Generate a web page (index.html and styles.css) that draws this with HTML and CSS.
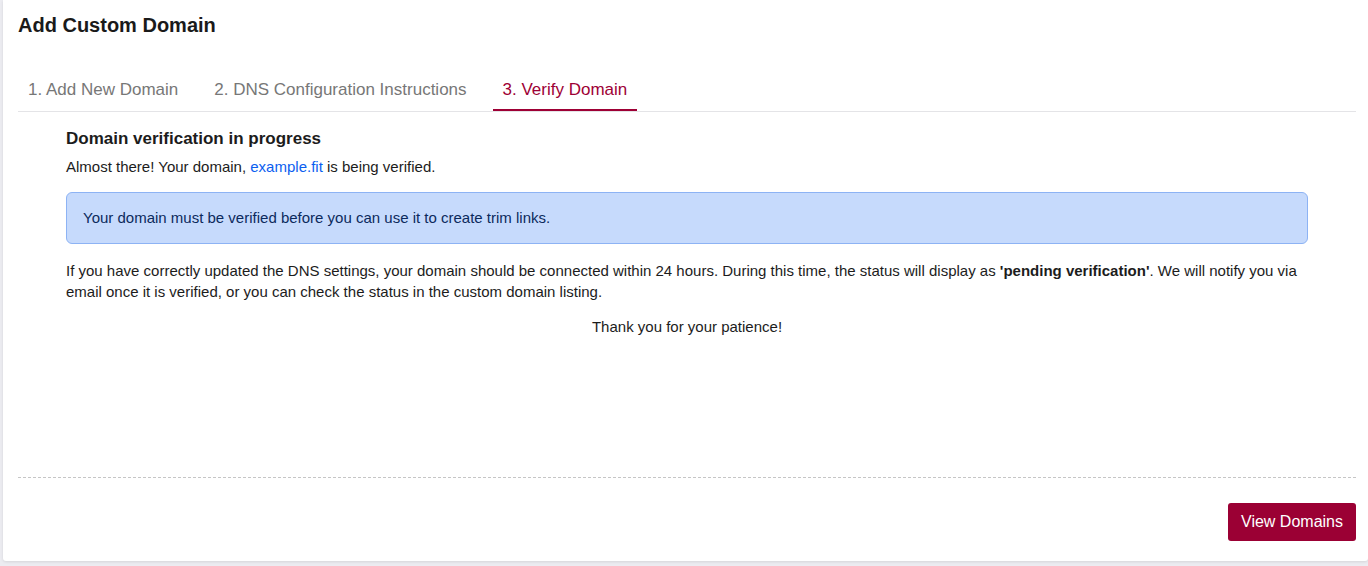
FILE: index.html
```html
<!DOCTYPE html>
<html lang="en">
<head>
<meta charset="utf-8">
<title>Add Custom Domain</title>
<link rel="stylesheet" href="styles.css">
</head>
<body>
<div class="card">
  <h1 class="title">Add Custom Domain</h1>
  <nav class="tabs">
    <span class="tab">1. Add New Domain</span>
    <span class="tab">2. DNS Configuration Instructions</span>
    <span class="tab active">3. Verify Domain</span>
  </nav>
  <section class="content">
    <h2 class="heading">Domain verification in progress</h2>
    <p class="lead">Almost there! Your domain, <a class="link" href="#">example.fit</a> is being verified.</p>
    <div class="alert">Your domain must be verified before you can use it to create trim links.</div>
    <p class="info">If you have correctly updated the DNS settings, your domain should be connected within 24 hours. During this time, the status will display as <strong>'pending verification'</strong>. We will notify you via email once it is verified, or you can check the status in the custom domain listing.</p>
    <p class="thanks">Thank you for your patience!</p>
  </section>
  <footer class="footer">
    <button class="btn" type="button">View Domains</button>
  </footer>
</div>
</body>
</html>
```

FILE: styles.css
```css
* { box-sizing: border-box; }
html, body { margin: 0; padding: 0; }
body {
  background: #ececf1;
  font-family: "Liberation Sans", Arial, Helvetica, sans-serif;
  color: #1c1c1c;
  height: 566px;
  overflow: hidden;
}
.card {
  margin-left: 3px;
  width: 1365px;
  height: 561px;
  background: #ffffff;
  border-radius: 0 0 3px 3px;
  box-shadow: 0 1px 3px rgba(0,0,0,0.10);
  padding: 13px 12px 20px 15px;
  display: flex;
  flex-direction: column;
}
.title {
  margin: 0;
  font-size: 20px;
  line-height: 24px;
  font-weight: 700;
  color: #1a1a1a;
}
.tabs {
  margin-top: 35px;
  display: flex;
  gap: 16px;
  border-bottom: 1px solid #e4e4e7;
}
.tab {
  font-size: 17px;
  line-height: 20px;
  padding: 8px 10px 9px 10px;
  color: #777777;
  border-bottom: 2px solid transparent;
}
.tab.active {
  color: #9e0035;
  border-bottom-color: #9e0035;
}
.content {
  flex: 1;
  padding: 17px 48px 0 48px;
}
.heading {
  margin: 0;
  font-size: 17px;
  line-height: 20px;
  font-weight: 700;
  color: #1c1c1c;
}
.lead {
  margin: 9px 0 0 0;
  font-size: 15px;
  line-height: 18px;
}
.link {
  color: #0b5ef0;
  text-decoration: none;
}
.alert {
  margin-top: 16px;
  background: #c6dafc;
  border: 1px solid #8db3f4;
  border-radius: 6px;
  padding: 16px 16px;
  font-size: 15px;
  line-height: 18px;
  color: #0c2a5c;
}
.info {
  margin: 16px 0 0 0;
  font-size: 15px;
  line-height: 21px;
}
.info strong { font-weight: 700; }
.thanks {
  margin: 14px 0 0 0;
  font-size: 15px;
  line-height: 21px;
  text-align: center;
}
.footer {
  border-top: 1px dashed #c6c6c6;
  padding-top: 25px;
  display: flex;
  justify-content: flex-end;
}
.btn {
  font-family: inherit;
  font-size: 16px;
  line-height: 20px;
  color: #ffffff;
  background: #9b0034;
  border: none;
  border-radius: 3px;
  padding: 9px 13px;
  height: 38px;
  width: 128px;
  cursor: pointer;
}
```
